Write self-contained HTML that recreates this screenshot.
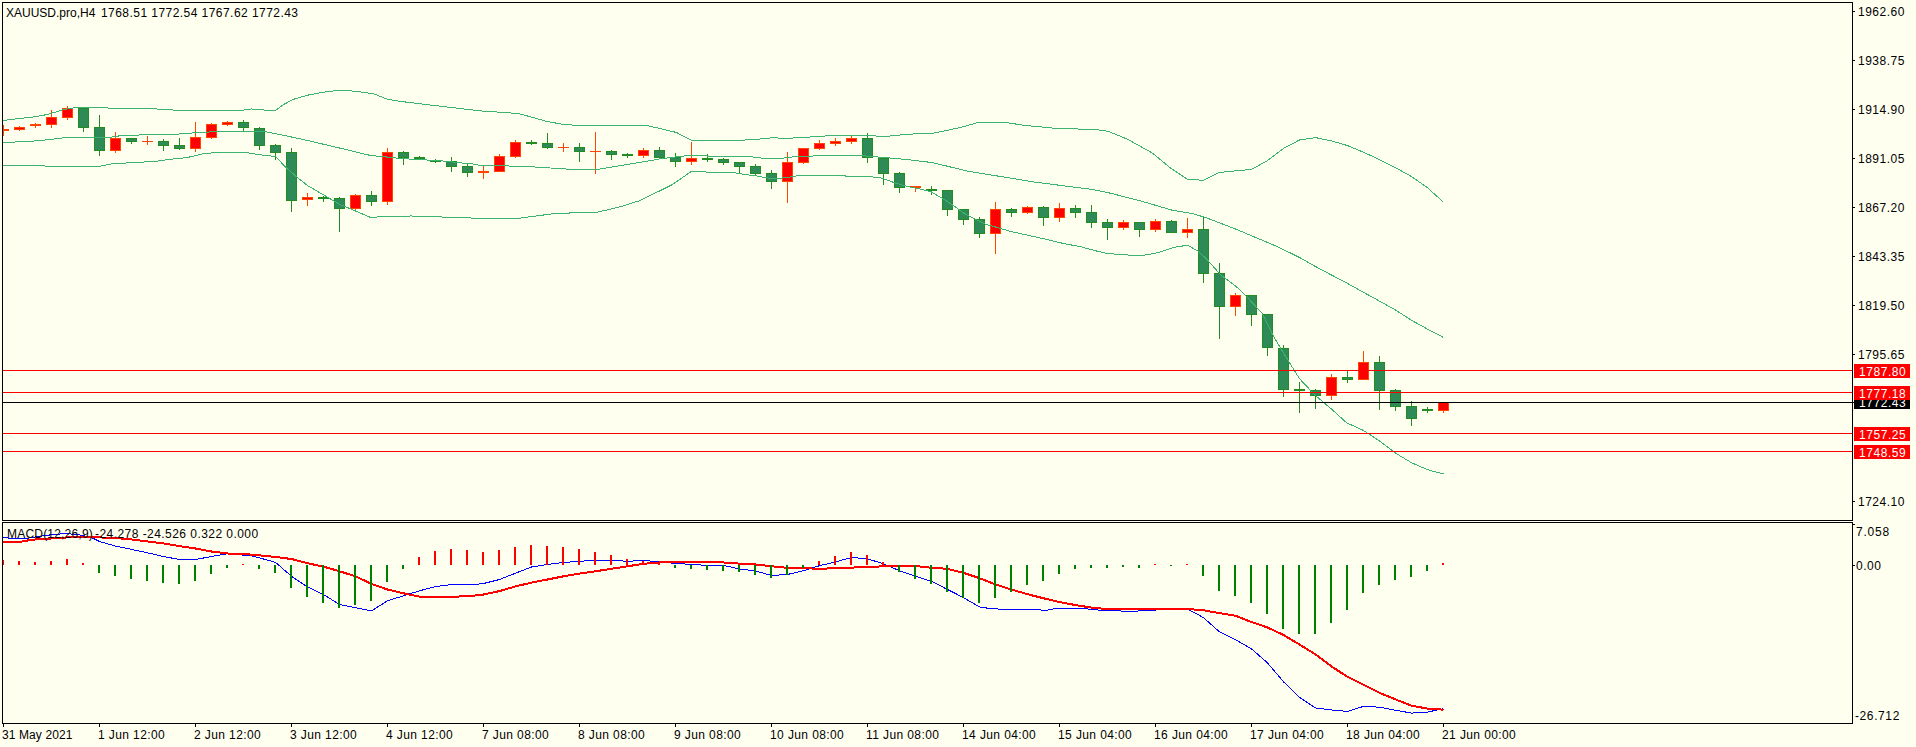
<!DOCTYPE html>
<html><head><meta charset="utf-8"><style>
html,body{margin:0;padding:0;background:#FFFFF0;width:1916px;height:747px;overflow:hidden;position:relative}
.t{position:absolute;font-family:"Liberation Sans", sans-serif;font-size:12px;line-height:14px;white-space:nowrap;color:#000}
.b{position:absolute;left:1854px;width:56px;height:14px;font-family:"Liberation Sans", sans-serif;font-size:12px;line-height:14px;color:#fff;white-space:nowrap;overflow:hidden}
.b span{position:absolute;left:5px;top:1px;letter-spacing:0.55px}
</style></head><body>
<svg width="1916" height="747" style="position:absolute;left:0;top:0"><g shape-rendering="crispEdges"><rect x="3" y="125" width="1" height="11" fill="#FF4500"/><rect x="-2" y="129" width="11" height="2" fill="#FF4500"/><rect x="19" y="126" width="1" height="5" fill="#FF4500"/><rect x="14" y="127" width="11" height="3" fill="#FF4500"/><rect x="15" y="128" width="9" height="1" fill="#FF0000"/><rect x="35" y="123" width="1" height="5" fill="#FF4500"/><rect x="30" y="124" width="11" height="2" fill="#FF4500"/><rect x="51" y="110" width="1" height="18" fill="#FF4500"/><rect x="46" y="117" width="11" height="8" fill="#FF4500"/><rect x="47" y="118" width="9" height="6" fill="#FF0000"/><rect x="67" y="106" width="1" height="14" fill="#FF4500"/><rect x="62" y="108" width="11" height="10" fill="#FF4500"/><rect x="63" y="109" width="9" height="8" fill="#FF0000"/><rect x="83" y="108" width="1" height="24" fill="#228B22"/><rect x="78" y="108" width="11" height="20" fill="#228B22"/><rect x="79" y="109" width="9" height="18" fill="#2E8B57"/><rect x="99" y="115" width="1" height="41" fill="#228B22"/><rect x="94" y="127" width="11" height="24" fill="#228B22"/><rect x="95" y="128" width="9" height="22" fill="#2E8B57"/><rect x="115" y="132" width="1" height="21" fill="#FF4500"/><rect x="110" y="138" width="11" height="13" fill="#FF4500"/><rect x="111" y="139" width="9" height="11" fill="#FF0000"/><rect x="131" y="138" width="1" height="6" fill="#228B22"/><rect x="126" y="138" width="11" height="4" fill="#228B22"/><rect x="127" y="139" width="9" height="2" fill="#2E8B57"/><rect x="147" y="136" width="1" height="9" fill="#FF4500"/><rect x="142" y="141" width="11" height="1" fill="#FF4500"/><rect x="163" y="139" width="1" height="12" fill="#228B22"/><rect x="158" y="141" width="11" height="5" fill="#228B22"/><rect x="159" y="142" width="9" height="3" fill="#2E8B57"/><rect x="179" y="138" width="1" height="12" fill="#228B22"/><rect x="174" y="145" width="11" height="4" fill="#228B22"/><rect x="175" y="146" width="9" height="2" fill="#2E8B57"/><rect x="195" y="122" width="1" height="30" fill="#FF4500"/><rect x="190" y="137" width="11" height="12" fill="#FF4500"/><rect x="191" y="138" width="9" height="10" fill="#FF0000"/><rect x="211" y="123" width="1" height="16" fill="#FF4500"/><rect x="206" y="124" width="11" height="14" fill="#FF4500"/><rect x="207" y="125" width="9" height="12" fill="#FF0000"/><rect x="227" y="121" width="1" height="5" fill="#FF4500"/><rect x="222" y="122" width="11" height="3" fill="#FF4500"/><rect x="223" y="123" width="9" height="1" fill="#FF0000"/><rect x="243" y="120" width="1" height="11" fill="#228B22"/><rect x="238" y="122" width="11" height="6" fill="#228B22"/><rect x="239" y="123" width="9" height="4" fill="#2E8B57"/><rect x="259" y="127" width="1" height="23" fill="#228B22"/><rect x="254" y="128" width="11" height="18" fill="#228B22"/><rect x="255" y="129" width="9" height="16" fill="#2E8B57"/><rect x="275" y="144" width="1" height="16" fill="#228B22"/><rect x="270" y="145" width="11" height="8" fill="#228B22"/><rect x="271" y="146" width="9" height="6" fill="#2E8B57"/><rect x="291" y="148" width="1" height="64" fill="#228B22"/><rect x="286" y="152" width="11" height="49" fill="#228B22"/><rect x="287" y="153" width="9" height="47" fill="#2E8B57"/><rect x="307" y="193" width="1" height="13" fill="#FF4500"/><rect x="302" y="197" width="11" height="3" fill="#FF4500"/><rect x="303" y="198" width="9" height="1" fill="#FF0000"/><rect x="323" y="196" width="1" height="6" fill="#228B22"/><rect x="318" y="197" width="11" height="2" fill="#228B22"/><rect x="339" y="197" width="1" height="35" fill="#228B22"/><rect x="334" y="198" width="11" height="11" fill="#228B22"/><rect x="335" y="199" width="9" height="9" fill="#2E8B57"/><rect x="355" y="194" width="1" height="17" fill="#FF4500"/><rect x="350" y="195" width="11" height="14" fill="#FF4500"/><rect x="351" y="196" width="9" height="12" fill="#FF0000"/><rect x="371" y="191" width="1" height="15" fill="#228B22"/><rect x="366" y="195" width="11" height="7" fill="#228B22"/><rect x="367" y="196" width="9" height="5" fill="#2E8B57"/><rect x="387" y="148" width="1" height="57" fill="#FF4500"/><rect x="382" y="152" width="11" height="50" fill="#FF4500"/><rect x="383" y="153" width="9" height="48" fill="#FF0000"/><rect x="403" y="151" width="1" height="14" fill="#228B22"/><rect x="398" y="152" width="11" height="6" fill="#228B22"/><rect x="399" y="153" width="9" height="4" fill="#2E8B57"/><rect x="419" y="156" width="1" height="4" fill="#228B22"/><rect x="414" y="157" width="11" height="2" fill="#228B22"/><rect x="435" y="159" width="1" height="4" fill="#228B22"/><rect x="430" y="160" width="11" height="2" fill="#228B22"/><rect x="451" y="157" width="1" height="15" fill="#228B22"/><rect x="446" y="161" width="11" height="6" fill="#228B22"/><rect x="447" y="162" width="9" height="4" fill="#2E8B57"/><rect x="467" y="164" width="1" height="13" fill="#228B22"/><rect x="462" y="166" width="11" height="7" fill="#228B22"/><rect x="463" y="167" width="9" height="5" fill="#2E8B57"/><rect x="483" y="166" width="1" height="13" fill="#FF4500"/><rect x="478" y="171" width="11" height="2" fill="#FF4500"/><rect x="499" y="154" width="1" height="18" fill="#FF4500"/><rect x="494" y="156" width="11" height="16" fill="#FF4500"/><rect x="495" y="157" width="9" height="14" fill="#FF0000"/><rect x="515" y="140" width="1" height="18" fill="#FF4500"/><rect x="510" y="142" width="11" height="15" fill="#FF4500"/><rect x="511" y="143" width="9" height="13" fill="#FF0000"/><rect x="531" y="140" width="1" height="5" fill="#228B22"/><rect x="526" y="142" width="11" height="2" fill="#228B22"/><rect x="547" y="133" width="1" height="16" fill="#228B22"/><rect x="542" y="143" width="11" height="5" fill="#228B22"/><rect x="543" y="144" width="9" height="3" fill="#2E8B57"/><rect x="563" y="143" width="1" height="9" fill="#FF4500"/><rect x="558" y="147" width="11" height="1" fill="#FF4500"/><rect x="579" y="143" width="1" height="19" fill="#228B22"/><rect x="574" y="147" width="11" height="5" fill="#228B22"/><rect x="575" y="148" width="9" height="3" fill="#2E8B57"/><rect x="595" y="132" width="1" height="42" fill="#FF4500"/><rect x="590" y="151" width="11" height="1" fill="#FF4500"/><rect x="611" y="150" width="1" height="10" fill="#228B22"/><rect x="606" y="151" width="11" height="4" fill="#228B22"/><rect x="607" y="152" width="9" height="2" fill="#2E8B57"/><rect x="627" y="153" width="1" height="5" fill="#228B22"/><rect x="622" y="154" width="11" height="2" fill="#228B22"/><rect x="643" y="148" width="1" height="10" fill="#FF4500"/><rect x="638" y="150" width="11" height="6" fill="#FF4500"/><rect x="639" y="151" width="9" height="4" fill="#FF0000"/><rect x="659" y="147" width="1" height="12" fill="#228B22"/><rect x="654" y="150" width="11" height="8" fill="#228B22"/><rect x="655" y="151" width="9" height="6" fill="#2E8B57"/><rect x="675" y="153" width="1" height="14" fill="#228B22"/><rect x="670" y="157" width="11" height="5" fill="#228B22"/><rect x="671" y="158" width="9" height="3" fill="#2E8B57"/><rect x="691" y="142" width="1" height="23" fill="#FF4500"/><rect x="686" y="158" width="11" height="4" fill="#FF4500"/><rect x="687" y="159" width="9" height="2" fill="#FF0000"/><rect x="707" y="154" width="1" height="8" fill="#228B22"/><rect x="702" y="158" width="11" height="2" fill="#228B22"/><rect x="723" y="158" width="1" height="7" fill="#228B22"/><rect x="718" y="159" width="11" height="4" fill="#228B22"/><rect x="719" y="160" width="9" height="2" fill="#2E8B57"/><rect x="739" y="162" width="1" height="11" fill="#228B22"/><rect x="734" y="162" width="11" height="5" fill="#228B22"/><rect x="735" y="163" width="9" height="3" fill="#2E8B57"/><rect x="755" y="164" width="1" height="11" fill="#228B22"/><rect x="750" y="166" width="11" height="8" fill="#228B22"/><rect x="751" y="167" width="9" height="6" fill="#2E8B57"/><rect x="771" y="170" width="1" height="19" fill="#228B22"/><rect x="766" y="173" width="11" height="9" fill="#228B22"/><rect x="767" y="174" width="9" height="7" fill="#2E8B57"/><rect x="787" y="152" width="1" height="51" fill="#FF4500"/><rect x="782" y="162" width="11" height="20" fill="#FF4500"/><rect x="783" y="163" width="9" height="18" fill="#FF0000"/><rect x="803" y="148" width="1" height="16" fill="#FF4500"/><rect x="798" y="148" width="11" height="15" fill="#FF4500"/><rect x="799" y="149" width="9" height="13" fill="#FF0000"/><rect x="819" y="140" width="1" height="10" fill="#FF4500"/><rect x="814" y="143" width="11" height="6" fill="#FF4500"/><rect x="815" y="144" width="9" height="4" fill="#FF0000"/><rect x="835" y="138" width="1" height="8" fill="#FF4500"/><rect x="830" y="141" width="11" height="3" fill="#FF4500"/><rect x="831" y="142" width="9" height="1" fill="#FF0000"/><rect x="851" y="136" width="1" height="8" fill="#FF4500"/><rect x="846" y="138" width="11" height="4" fill="#FF4500"/><rect x="847" y="139" width="9" height="2" fill="#FF0000"/><rect x="867" y="133" width="1" height="30" fill="#228B22"/><rect x="862" y="138" width="11" height="20" fill="#228B22"/><rect x="863" y="139" width="9" height="18" fill="#2E8B57"/><rect x="883" y="158" width="1" height="27" fill="#228B22"/><rect x="878" y="158" width="11" height="16" fill="#228B22"/><rect x="879" y="159" width="9" height="14" fill="#2E8B57"/><rect x="899" y="172" width="1" height="21" fill="#228B22"/><rect x="894" y="173" width="11" height="15" fill="#228B22"/><rect x="895" y="174" width="9" height="13" fill="#2E8B57"/><rect x="915" y="186" width="1" height="6" fill="#FF4500"/><rect x="910" y="186" width="11" height="2" fill="#FF4500"/><rect x="931" y="186" width="1" height="9" fill="#228B22"/><rect x="926" y="189" width="11" height="2" fill="#228B22"/><rect x="947" y="190" width="1" height="26" fill="#228B22"/><rect x="942" y="190" width="11" height="20" fill="#228B22"/><rect x="943" y="191" width="9" height="18" fill="#2E8B57"/><rect x="963" y="209" width="1" height="16" fill="#228B22"/><rect x="958" y="209" width="11" height="11" fill="#228B22"/><rect x="959" y="210" width="9" height="9" fill="#2E8B57"/><rect x="979" y="217" width="1" height="21" fill="#228B22"/><rect x="974" y="219" width="11" height="15" fill="#228B22"/><rect x="975" y="220" width="9" height="13" fill="#2E8B57"/><rect x="995" y="202" width="1" height="52" fill="#FF4500"/><rect x="990" y="209" width="11" height="25" fill="#FF4500"/><rect x="991" y="210" width="9" height="23" fill="#FF0000"/><rect x="1011" y="208" width="1" height="9" fill="#228B22"/><rect x="1006" y="209" width="11" height="4" fill="#228B22"/><rect x="1007" y="210" width="9" height="2" fill="#2E8B57"/><rect x="1027" y="206" width="1" height="8" fill="#FF4500"/><rect x="1022" y="207" width="11" height="6" fill="#FF4500"/><rect x="1023" y="208" width="9" height="4" fill="#FF0000"/><rect x="1043" y="206" width="1" height="20" fill="#228B22"/><rect x="1038" y="207" width="11" height="11" fill="#228B22"/><rect x="1039" y="208" width="9" height="9" fill="#2E8B57"/><rect x="1059" y="203" width="1" height="19" fill="#FF4500"/><rect x="1054" y="208" width="11" height="10" fill="#FF4500"/><rect x="1055" y="209" width="9" height="8" fill="#FF0000"/><rect x="1075" y="205" width="1" height="13" fill="#228B22"/><rect x="1070" y="208" width="11" height="5" fill="#228B22"/><rect x="1071" y="209" width="9" height="3" fill="#2E8B57"/><rect x="1091" y="205" width="1" height="23" fill="#228B22"/><rect x="1086" y="212" width="11" height="11" fill="#228B22"/><rect x="1087" y="213" width="9" height="9" fill="#2E8B57"/><rect x="1107" y="219" width="1" height="21" fill="#228B22"/><rect x="1102" y="222" width="11" height="6" fill="#228B22"/><rect x="1103" y="223" width="9" height="4" fill="#2E8B57"/><rect x="1123" y="220" width="1" height="10" fill="#FF4500"/><rect x="1118" y="222" width="11" height="6" fill="#FF4500"/><rect x="1119" y="223" width="9" height="4" fill="#FF0000"/><rect x="1139" y="222" width="1" height="15" fill="#228B22"/><rect x="1134" y="222" width="11" height="8" fill="#228B22"/><rect x="1135" y="223" width="9" height="6" fill="#2E8B57"/><rect x="1155" y="219" width="1" height="13" fill="#FF4500"/><rect x="1150" y="221" width="11" height="9" fill="#FF4500"/><rect x="1151" y="222" width="9" height="7" fill="#FF0000"/><rect x="1171" y="220" width="1" height="13" fill="#228B22"/><rect x="1166" y="221" width="11" height="12" fill="#228B22"/><rect x="1167" y="222" width="9" height="10" fill="#2E8B57"/><rect x="1187" y="218" width="1" height="20" fill="#FF4500"/><rect x="1182" y="229" width="11" height="4" fill="#FF4500"/><rect x="1183" y="230" width="9" height="2" fill="#FF0000"/><rect x="1203" y="217" width="1" height="66" fill="#228B22"/><rect x="1198" y="229" width="11" height="45" fill="#228B22"/><rect x="1199" y="230" width="9" height="43" fill="#2E8B57"/><rect x="1219" y="263" width="1" height="76" fill="#228B22"/><rect x="1214" y="273" width="11" height="34" fill="#228B22"/><rect x="1215" y="274" width="9" height="32" fill="#2E8B57"/><rect x="1235" y="293" width="1" height="23" fill="#FF4500"/><rect x="1230" y="295" width="11" height="12" fill="#FF4500"/><rect x="1231" y="296" width="9" height="10" fill="#FF0000"/><rect x="1251" y="295" width="1" height="31" fill="#228B22"/><rect x="1246" y="295" width="11" height="20" fill="#228B22"/><rect x="1247" y="296" width="9" height="18" fill="#2E8B57"/><rect x="1267" y="314" width="1" height="42" fill="#228B22"/><rect x="1262" y="314" width="11" height="34" fill="#228B22"/><rect x="1263" y="315" width="9" height="32" fill="#2E8B57"/><rect x="1283" y="345" width="1" height="52" fill="#228B22"/><rect x="1278" y="348" width="11" height="42" fill="#228B22"/><rect x="1279" y="349" width="9" height="40" fill="#2E8B57"/><rect x="1299" y="382" width="1" height="31" fill="#228B22"/><rect x="1294" y="389" width="11" height="2" fill="#228B22"/><rect x="1315" y="389" width="1" height="20" fill="#228B22"/><rect x="1310" y="390" width="11" height="6" fill="#228B22"/><rect x="1311" y="391" width="9" height="4" fill="#2E8B57"/><rect x="1331" y="374" width="1" height="26" fill="#FF4500"/><rect x="1326" y="377" width="11" height="19" fill="#FF4500"/><rect x="1327" y="378" width="9" height="17" fill="#FF0000"/><rect x="1347" y="371" width="1" height="12" fill="#228B22"/><rect x="1342" y="377" width="11" height="3" fill="#228B22"/><rect x="1343" y="378" width="9" height="1" fill="#2E8B57"/><rect x="1363" y="351" width="1" height="29" fill="#FF4500"/><rect x="1358" y="362" width="11" height="18" fill="#FF4500"/><rect x="1359" y="363" width="9" height="16" fill="#FF0000"/><rect x="1379" y="356" width="1" height="54" fill="#228B22"/><rect x="1374" y="362" width="11" height="29" fill="#228B22"/><rect x="1375" y="363" width="9" height="27" fill="#2E8B57"/><rect x="1395" y="389" width="1" height="22" fill="#228B22"/><rect x="1390" y="390" width="11" height="17" fill="#228B22"/><rect x="1391" y="391" width="9" height="15" fill="#2E8B57"/><rect x="1411" y="401" width="1" height="25" fill="#228B22"/><rect x="1406" y="406" width="11" height="13" fill="#228B22"/><rect x="1407" y="407" width="9" height="11" fill="#2E8B57"/><rect x="1427" y="407" width="1" height="6" fill="#228B22"/><rect x="1422" y="409" width="11" height="2" fill="#228B22"/><rect x="1443" y="402" width="1" height="11" fill="#FF4500"/><rect x="1438" y="402" width="11" height="9" fill="#FF4500"/><rect x="1439" y="403" width="9" height="7" fill="#FF0000"/></g><polyline points="3.5,120.5 15.5,119.0 31.5,117.2 47.5,114.5 63.5,109.6 75.5,107.5 96.5,107.4 107.5,108.0 156.5,109.0 172.5,110.0 188.5,111.0 219.5,110.5 240.5,110.5 251.5,109.0 268.5,110.4 275.5,110.4 283.5,104.6 293.5,99.3 307.5,95.2 322.5,92.3 337.5,90.4 347.5,90.4 360.5,92.0 373.5,93.7 387.5,99.3 400.5,101.4 427.5,104.7 480.5,110.9 518.5,113.5 547.5,121.6 563.5,124.4 574.5,125.2 646.5,125.4 664.5,129.6 676.5,132.5 691.5,140.4 723.5,140.5 739.5,140.3 755.5,139.5 771.5,137.8 787.5,138.3 803.5,137.5 819.5,136.3 835.5,135.5 860.5,135.4 886.5,136.4 907.5,134.2 932.5,133.4 950.5,129.7 966.5,125.9 978.5,122.2 1003.5,122.2 1025.5,125.5 1056.5,128.4 1095.5,129.5 1108.5,131.4 1127.5,139.2 1152.5,153.1 1170.5,168.1 1187.5,179.3 1203.5,180.3 1219.5,172.4 1235.5,170.9 1251.5,169.4 1267.5,160.6 1283.5,148.4 1299.5,140.0 1315.5,137.6 1331.5,140.9 1347.5,145.6 1363.5,152.2 1379.5,159.7 1395.5,167.7 1411.5,176.5 1427.5,187.8 1443.5,202.2" fill="none" stroke="#3CB371" stroke-width="1" shape-rendering="crispEdges"/><polyline points="3.5,142.4 27.5,141.6 39.5,140.5 51.5,139.4 63.5,137.8 96.5,137.5 107.5,137.8 123.5,135.2 171.5,134.6 187.5,133.3 203.5,132.3 219.5,131.4 248.5,131.4 266.5,131.9 280.5,134.6 307.5,140.5 339.5,148.0 370.5,155.5 387.5,157.1 400.5,158.5 428.5,160.1 446.5,161.2 460.5,162.9 472.5,163.9 480.5,165.4 523.5,166.3 540.5,167.3 557.5,168.5 572.5,169.4 597.5,169.4 631.5,163.8 659.5,159.0 674.5,157.1 691.5,155.2 712.5,156.3 747.5,156.4 765.5,158.5 779.5,158.5 795.5,156.6 827.5,155.5 859.5,155.5 872.5,156.5 904.5,159.3 932.5,162.6 966.5,170.9 1000.5,176.5 1032.5,181.8 1092.5,189.5 1110.5,193.2 1141.5,201.2 1172.5,210.3 1192.5,213.6 1205.5,217.5 1235.5,229.0 1270.5,243.7 1280.5,248.1 1299.5,257.5 1315.5,266.5 1331.5,275.0 1347.5,283.4 1363.5,292.3 1379.5,301.1 1395.5,310.0 1411.5,320.3 1427.5,329.1 1443.5,337.5" fill="none" stroke="#3CB371" stroke-width="1" shape-rendering="crispEdges"/><polyline points="3.5,165.5 60.5,166.2 100.5,166.2 112.5,163.7 139.5,162.3 155.5,161.3 171.5,159.2 187.5,157.5 203.5,153.7 219.5,152.3 248.5,153.0 264.5,155.4 275.5,156.5 286.5,168.0 296.5,176.8 307.5,185.5 323.5,194.9 339.5,204.2 355.5,211.0 370.5,217.4 387.5,216.3 411.5,216.0 460.5,217.6 478.5,218.3 518.5,218.3 540.5,215.4 557.5,213.2 595.5,212.6 619.5,207.0 640.5,200.4 672.5,184.5 691.5,171.3 712.5,172.3 731.5,172.1 744.5,174.5 756.5,175.9 767.5,178.0 779.5,178.3 790.5,176.9 799.5,175.3 843.5,175.3 846.5,176.4 872.5,177.0 880.5,177.8 896.5,183.4 906.5,186.2 920.5,189.2 931.5,192.0 942.5,198.5 952.5,204.9 963.5,213.0 975.5,219.4 985.5,224.2 995.5,227.0 1010.5,231.4 1032.5,236.3 1048.5,239.8 1063.5,243.5 1080.5,246.7 1096.5,251.0 1106.5,253.4 1116.5,254.2 1132.5,255.3 1142.5,255.3 1150.5,254.2 1159.5,252.1 1174.5,247.3 1187.5,245.2 1198.5,251.5 1207.5,260.0 1220.5,274.7 1235.5,285.9 1245.5,295.3 1257.5,308.4 1262.5,313.7 1272.5,334.5 1283.5,353.0 1299.5,378.7 1315.5,395.6 1332.5,410.0 1346.5,422.7 1363.5,430.5 1379.5,441.0 1395.5,453.1 1411.5,462.7 1427.5,469.7 1443.5,474.0" fill="none" stroke="#3CB371" stroke-width="1" shape-rendering="crispEdges"/><rect x="3" y="370" width="1849" height="1" fill="#FF0000" shape-rendering="crispEdges"/><rect x="3" y="392" width="1849" height="1" fill="#FF0000" shape-rendering="crispEdges"/><rect x="3" y="433" width="1849" height="1" fill="#FF0000" shape-rendering="crispEdges"/><rect x="3" y="451" width="1849" height="1" fill="#FF0000" shape-rendering="crispEdges"/><rect x="3" y="402" width="1851" height="1" fill="#000000" shape-rendering="crispEdges"/><polyline points="3.5,537.5 12.5,538.6 27.5,538.3 39.5,536.3 48.5,535.1 57.5,534.3 63.5,533.5 73.5,534.2 80.5,535.1 90.5,537.0 99.5,541.5 115.5,546.1 131.5,549.4 147.5,552.8 163.5,556.5 179.5,559.5 195.5,559.5 211.5,556.5 227.5,553.7 252.5,556.0 275.5,562.3 291.5,576.3 307.5,587.0 323.5,594.5 339.5,604.5 355.5,607.7 371.5,610.8 387.5,600.8 403.5,595.8 419.5,590.8 435.5,586.6 451.5,584.5 475.5,584.5 483.5,583.5 499.5,579.5 515.5,573.2 531.5,567.0 547.5,564.4 563.5,562.5 579.5,561.3 595.5,560.3 611.5,560.3 627.5,561.3 643.5,560.4 659.5,561.9 675.5,563.4 691.5,564.4 707.5,565.4 723.5,565.4 739.5,569.0 755.5,571.0 771.5,575.5 787.5,574.5 803.5,570.7 819.5,565.7 835.5,561.9 851.5,557.5 867.5,558.8 883.5,563.8 899.5,570.7 915.5,576.3 931.5,581.3 947.5,589.5 963.5,597.6 979.5,607.0 988.5,608.3 1004.5,609.5 1035.5,609.5 1045.5,610.4 1055.5,608.5 1083.5,608.5 1099.5,610.2 1131.5,611.4 1150.5,610.2 1187.5,609.0 1203.5,617.6 1219.5,631.9 1235.5,639.6 1251.5,648.9 1267.5,662.9 1283.5,681.8 1299.5,697.3 1315.5,707.9 1331.5,710.0 1347.5,711.4 1363.5,706.4 1379.5,707.2 1395.5,710.2 1411.5,713.1 1427.5,712.1 1443.5,708.6" fill="none" stroke="#0000FF" stroke-width="1" shape-rendering="crispEdges"/><polyline points="3.5,542.1 19.5,542.0 27.5,540.5 35.5,539.4 51.5,538.5 67.5,537.4 83.5,536.8 99.5,537.4 115.5,538.0 131.5,539.4 147.5,541.4 163.5,543.4 179.5,546.1 195.5,548.5 211.5,551.5 227.5,553.5 243.5,554.0 259.5,555.3 275.5,557.0 291.5,559.0 307.5,563.2 323.5,566.6 339.5,571.3 355.5,576.3 371.5,583.9 387.5,589.5 403.5,593.3 419.5,596.6 451.5,596.6 467.5,596.4 483.5,594.5 499.5,591.1 515.5,586.4 531.5,582.6 547.5,579.5 563.5,576.3 579.5,573.6 595.5,571.3 611.5,568.8 627.5,566.3 643.5,563.8 659.5,562.5 675.5,561.9 707.5,561.9 723.5,562.5 739.5,563.6 755.5,564.4 771.5,566.3 787.5,567.8 803.5,568.2 819.5,568.8 835.5,568.2 851.5,567.6 867.5,567.0 883.5,566.3 915.5,566.0 931.5,567.8 947.5,568.8 963.5,572.8 979.5,578.2 995.5,584.5 1011.5,589.5 1027.5,594.2 1043.5,598.3 1059.5,602.0 1075.5,605.1 1091.5,607.6 1107.5,609.1 1187.5,609.0 1203.5,610.3 1219.5,613.1 1235.5,615.8 1251.5,622.0 1267.5,627.5 1283.5,635.0 1299.5,644.5 1315.5,654.4 1331.5,666.4 1347.5,676.9 1363.5,684.7 1379.5,692.8 1395.5,699.4 1411.5,705.7 1427.5,708.6 1443.5,709.7" fill="none" stroke="#FF0000" stroke-width="2" shape-rendering="crispEdges"/><g shape-rendering="crispEdges"><rect x="2" y="560" width="2" height="5" fill="#FF0000"/><rect x="18" y="561" width="2" height="4" fill="#FF0000"/><rect x="34" y="562" width="2" height="3" fill="#FF0000"/><rect x="50" y="561" width="2" height="4" fill="#FF0000"/><rect x="66" y="559" width="2" height="6" fill="#FF0000"/><rect x="82" y="563" width="2" height="2" fill="#FF0000"/><rect x="98" y="565" width="2" height="8" fill="#008000"/><rect x="114" y="565" width="2" height="11" fill="#008000"/><rect x="130" y="565" width="2" height="14" fill="#008000"/><rect x="146" y="565" width="2" height="16" fill="#008000"/><rect x="162" y="565" width="2" height="18" fill="#008000"/><rect x="178" y="565" width="2" height="19" fill="#008000"/><rect x="194" y="565" width="2" height="16" fill="#008000"/><rect x="210" y="565" width="2" height="9" fill="#008000"/><rect x="226" y="565" width="2" height="3" fill="#008000"/><rect x="242" y="564" width="2" height="1" fill="#FF0000"/><rect x="258" y="565" width="2" height="4" fill="#008000"/><rect x="274" y="565" width="2" height="8" fill="#008000"/><rect x="290" y="565" width="2" height="23" fill="#008000"/><rect x="306" y="565" width="2" height="32" fill="#008000"/><rect x="322" y="565" width="2" height="38" fill="#008000"/><rect x="338" y="565" width="2" height="43" fill="#008000"/><rect x="354" y="565" width="2" height="40" fill="#008000"/><rect x="370" y="565" width="2" height="36" fill="#008000"/><rect x="386" y="565" width="2" height="17" fill="#008000"/><rect x="402" y="565" width="2" height="4" fill="#008000"/><rect x="418" y="557" width="2" height="8" fill="#FF0000"/><rect x="434" y="551" width="2" height="14" fill="#FF0000"/><rect x="450" y="549" width="2" height="16" fill="#FF0000"/><rect x="466" y="550" width="2" height="15" fill="#FF0000"/><rect x="482" y="552" width="2" height="13" fill="#FF0000"/><rect x="498" y="550" width="2" height="15" fill="#FF0000"/><rect x="514" y="547" width="2" height="18" fill="#FF0000"/><rect x="530" y="545" width="2" height="20" fill="#FF0000"/><rect x="546" y="546" width="2" height="19" fill="#FF0000"/><rect x="562" y="547" width="2" height="18" fill="#FF0000"/><rect x="578" y="549" width="2" height="16" fill="#FF0000"/><rect x="594" y="552" width="2" height="13" fill="#FF0000"/><rect x="610" y="555" width="2" height="10" fill="#FF0000"/><rect x="626" y="559" width="2" height="6" fill="#FF0000"/><rect x="642" y="561" width="2" height="4" fill="#FF0000"/><rect x="658" y="563" width="2" height="2" fill="#FF0000"/><rect x="674" y="565" width="2" height="3" fill="#008000"/><rect x="690" y="565" width="2" height="4" fill="#008000"/><rect x="706" y="565" width="2" height="5" fill="#008000"/><rect x="722" y="565" width="2" height="6" fill="#008000"/><rect x="738" y="565" width="2" height="7" fill="#008000"/><rect x="754" y="565" width="2" height="10" fill="#008000"/><rect x="770" y="565" width="2" height="13" fill="#008000"/><rect x="786" y="565" width="2" height="10" fill="#008000"/><rect x="802" y="565" width="2" height="3" fill="#008000"/><rect x="818" y="561" width="2" height="4" fill="#FF0000"/><rect x="834" y="556" width="2" height="9" fill="#FF0000"/><rect x="850" y="552" width="2" height="13" fill="#FF0000"/><rect x="866" y="555" width="2" height="10" fill="#FF0000"/><rect x="882" y="562" width="2" height="3" fill="#FF0000"/><rect x="898" y="565" width="2" height="7" fill="#008000"/><rect x="914" y="565" width="2" height="14" fill="#008000"/><rect x="930" y="565" width="2" height="19" fill="#008000"/><rect x="946" y="565" width="2" height="27" fill="#008000"/><rect x="962" y="565" width="2" height="33" fill="#008000"/><rect x="978" y="565" width="2" height="38" fill="#008000"/><rect x="994" y="565" width="2" height="33" fill="#008000"/><rect x="1010" y="565" width="2" height="27" fill="#008000"/><rect x="1026" y="565" width="2" height="20" fill="#008000"/><rect x="1042" y="565" width="2" height="16" fill="#008000"/><rect x="1058" y="565" width="2" height="9" fill="#008000"/><rect x="1074" y="565" width="2" height="4" fill="#008000"/><rect x="1090" y="565" width="2" height="3" fill="#008000"/><rect x="1106" y="565" width="2" height="3" fill="#008000"/><rect x="1122" y="565" width="2" height="2" fill="#008000"/><rect x="1138" y="565" width="2" height="3" fill="#008000"/><rect x="1154" y="564" width="2" height="1" fill="#FF0000"/><rect x="1170" y="565" width="2" height="1" fill="#008000"/><rect x="1186" y="564" width="2" height="1" fill="#FF0000"/><rect x="1202" y="565" width="2" height="11" fill="#008000"/><rect x="1218" y="565" width="2" height="26" fill="#008000"/><rect x="1234" y="565" width="2" height="31" fill="#008000"/><rect x="1250" y="565" width="2" height="38" fill="#008000"/><rect x="1266" y="565" width="2" height="49" fill="#008000"/><rect x="1282" y="565" width="2" height="64" fill="#008000"/><rect x="1298" y="565" width="2" height="69" fill="#008000"/><rect x="1314" y="565" width="2" height="69" fill="#008000"/><rect x="1330" y="565" width="2" height="58" fill="#008000"/><rect x="1346" y="565" width="2" height="45" fill="#008000"/><rect x="1362" y="565" width="2" height="28" fill="#008000"/><rect x="1378" y="565" width="2" height="20" fill="#008000"/><rect x="1394" y="565" width="2" height="15" fill="#008000"/><rect x="1410" y="565" width="2" height="12" fill="#008000"/><rect x="1426" y="565" width="2" height="6" fill="#008000"/><rect x="1442" y="563" width="2" height="2" fill="#FF0000"/></g><g shape-rendering="crispEdges" fill="#000"><rect x="0" y="0" width="2" height="747" fill="#FFFFF0"/><rect x="2" y="2" width="1851" height="1"/><rect x="2" y="2" width="1" height="519"/><rect x="1852" y="2" width="1" height="519"/><rect x="2" y="520" width="1851" height="1"/><rect x="2" y="522" width="1851" height="1"/><rect x="2" y="522" width="1" height="202"/><rect x="1852" y="522" width="1" height="202"/><rect x="2" y="723" width="1851" height="1"/><rect x="1853" y="11" width="2" height="1"/><rect x="1853" y="60" width="2" height="1"/><rect x="1853" y="109" width="2" height="1"/><rect x="1853" y="158" width="2" height="1"/><rect x="1853" y="207" width="2" height="1"/><rect x="1853" y="256" width="2" height="1"/><rect x="1853" y="305" width="2" height="1"/><rect x="1853" y="354" width="2" height="1"/><rect x="1853" y="501" width="2" height="1"/><rect x="1853" y="524" width="2" height="1"/><rect x="1853" y="565" width="2" height="1"/><rect x="3" y="724" width="1" height="3"/><rect x="99" y="724" width="1" height="3"/><rect x="195" y="724" width="1" height="3"/><rect x="291" y="724" width="1" height="3"/><rect x="387" y="724" width="1" height="3"/><rect x="483" y="724" width="1" height="3"/><rect x="579" y="724" width="1" height="3"/><rect x="675" y="724" width="1" height="3"/><rect x="771" y="724" width="1" height="3"/><rect x="867" y="724" width="1" height="3"/><rect x="963" y="724" width="1" height="3"/><rect x="1059" y="724" width="1" height="3"/><rect x="1155" y="724" width="1" height="3"/><rect x="1251" y="724" width="1" height="3"/><rect x="1347" y="724" width="1" height="3"/><rect x="1443" y="724" width="1" height="3"/></g></svg>
<div class="t" style="left:6px;top:6px;color:#000;letter-spacing:0px">XAUUSD.pro,H4</div><div class="t" style="left:101px;top:6px;color:#000;letter-spacing:0.45px">1768.51 1772.54 1767.62 1772.43</div><div class="t" style="left:7px;top:527px;color:#000;letter-spacing:0.2px">MACD(12,26,9)</div><div class="t" style="left:95px;top:527px;color:#000;letter-spacing:0.45px">-24.278 -24.526 0.322 0.000</div><div class="t" style="left:1858px;top:5px;color:#000;letter-spacing:0.5px">1962.60</div><div class="t" style="left:1858px;top:54px;color:#000;letter-spacing:0.5px">1938.75</div><div class="t" style="left:1858px;top:103px;color:#000;letter-spacing:0.5px">1914.90</div><div class="t" style="left:1858px;top:152px;color:#000;letter-spacing:0.5px">1891.05</div><div class="t" style="left:1858px;top:201px;color:#000;letter-spacing:0.5px">1867.20</div><div class="t" style="left:1858px;top:250px;color:#000;letter-spacing:0.5px">1843.35</div><div class="t" style="left:1858px;top:299px;color:#000;letter-spacing:0.5px">1819.50</div><div class="t" style="left:1858px;top:348px;color:#000;letter-spacing:0.5px">1795.65</div><div class="t" style="left:1858px;top:495px;color:#000;letter-spacing:0.5px">1724.10</div><div class="t" style="left:1856px;top:525px;color:#000;letter-spacing:0.8px">7.058</div><div class="t" style="left:1856px;top:559px;color:#000;letter-spacing:0.5px">0.00</div><div class="t" style="left:1855px;top:709px;color:#000;letter-spacing:0.6px">-26.712</div><div class="t" style="left:2px;top:728px;color:#000;letter-spacing:0.1px">31 May 2021</div><div class="t" style="left:98px;top:728px;color:#000;letter-spacing:0.4px">1 Jun 12:00</div><div class="t" style="left:194px;top:728px;color:#000;letter-spacing:0.4px">2 Jun 12:00</div><div class="t" style="left:290px;top:728px;color:#000;letter-spacing:0.4px">3 Jun 12:00</div><div class="t" style="left:386px;top:728px;color:#000;letter-spacing:0.4px">4 Jun 12:00</div><div class="t" style="left:482px;top:728px;color:#000;letter-spacing:0.4px">7 Jun 08:00</div><div class="t" style="left:578px;top:728px;color:#000;letter-spacing:0.4px">8 Jun 08:00</div><div class="t" style="left:674px;top:728px;color:#000;letter-spacing:0.4px">9 Jun 08:00</div><div class="t" style="left:770px;top:728px;color:#000;letter-spacing:0.4px">10 Jun 08:00</div><div class="t" style="left:866px;top:728px;color:#000;letter-spacing:0.4px">11 Jun 08:00</div><div class="t" style="left:962px;top:728px;color:#000;letter-spacing:0.4px">14 Jun 04:00</div><div class="t" style="left:1058px;top:728px;color:#000;letter-spacing:0.4px">15 Jun 04:00</div><div class="t" style="left:1154px;top:728px;color:#000;letter-spacing:0.4px">16 Jun 04:00</div><div class="t" style="left:1250px;top:728px;color:#000;letter-spacing:0.4px">17 Jun 04:00</div><div class="t" style="left:1346px;top:728px;color:#000;letter-spacing:0.4px">18 Jun 04:00</div><div class="t" style="left:1442px;top:728px;color:#000;letter-spacing:0.4px">21 Jun 00:00</div>
<div class="b" style="top:395px;background:#000000"><span>1772.43</span></div><div class="b" style="top:364px;background:#FF0000"><span>1787.80</span></div><div class="b" style="top:386px;background:#FF0000"><span>1777.18</span></div><div class="b" style="top:427px;background:#FF0000"><span>1757.25</span></div><div class="b" style="top:445px;background:#FF0000"><span>1748.59</span></div>
</body></html>
